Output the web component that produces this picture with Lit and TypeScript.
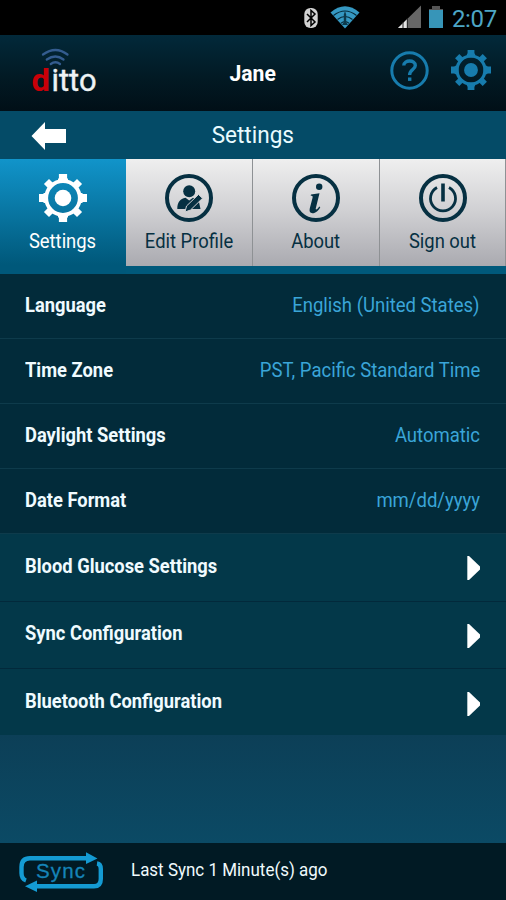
import { LitElement, html, css, svg } from 'lit';
import { customElement, property } from 'lit/decorators.js';

const TEETH = [0, 45, 90, 135, 180, 225, 270, 315];

@customElement('gear-icon')
export class GearIcon extends LitElement {
  static styles = css`
    :host {
      display: block;
    }
    svg {
      display: block;
      width: 100%;
      height: 100%;
    }
  `;

  render() {
    return html`
      <svg viewBox="-24 -24 48 48" fill="currentColor">
        ${TEETH.map(a => svg`<path
          d="${a % 90 ? 'M-3.6 -15.5V-23.4H3.6V-15.5Z' : 'M-5 -15V-19L-4.1 -20V-24H4.1V-20L5 -19V-15Z'}"
          transform="rotate(${a})" />`)}
        <circle r="16.8" fill="none" stroke="currentColor" stroke-width="3.8" />
        <circle r="8.3" />
      </svg>
    `;
  }
}

@customElement('setting-row')
export class SettingRow extends LitElement {
  @property() label = '';
  @property() value = '';
  @property({ type: Boolean, reflect: true }) link = false;

  static styles = css`
    :host {
      display: flex;
      box-sizing: border-box;
      align-items: center;
      justify-content: space-between;
      height: 65px;
      padding: 0 26px 2px 25px;
      background: #022b3a;
      border-bottom: 1px solid #0e3b4b;
      font-size: 20px;
    }
    :host([link]) {
      height: 67.5px;
      padding-bottom: 3px;
      background: #033849;
      border-bottom-color: #02293b;
    }
    :host([link]:last-of-type) {
      height: 66px;
      padding-bottom: 2px;
      border-bottom: 0;
    }
    .label {
      color: #f0fbff;
      font-weight: 700;
      transform: scaleX(0.917);
      transform-origin: left;
    }
    .value {
      color: #3aa5d8;
      transform: scaleX(0.925);
      transform-origin: right;
    }
    svg {
      display: block;
      margin-top: 5px;
    }
  `;

  render() {
    return html`
      <span class="label">${this.label}</span>
      ${this.link
        ? html`<svg width="13" height="24" viewBox="0 0 13 24"><path d="M.3 0H2L13 10.5V13.5L2 24H.3Z" fill="#fff" /></svg>`
        : html`<span class="value">${this.value}</span>`}
    `;
  }
}

@customElement('app-root')
export class AppRoot extends LitElement {
  static styles = css`
    :host {
      display: flex;
      flex-direction: column;
      box-sizing: border-box;
      width: 506px;
      height: 900px;
      overflow: hidden;
      font-family: Roboto, "Liberation Sans", sans-serif;
      background: linear-gradient(#0c3f57 735px, #0b4a65 843px);
      white-space: nowrap;
    }
    svg {
      display: block;
    }
    .status {
      display: flex;
      align-items: center;
      justify-content: flex-end;
      box-sizing: border-box;
      height: 35px;
      padding: 2px 9px 0 0;
      background: #000;
    }
    .status svg {
      margin-top: -2px;
    }
    .clock {
      margin-left: 6px;
      color: #4da6c6;
      font-size: 24px;
      letter-spacing: -0.3px;
    }
    .header {
      display: grid;
      grid-template-columns: 1fr auto 1fr;
      align-items: center;
      height: 76px;
      background: linear-gradient(#02293a, #021a24 55%, #010f17);
    }
    .name {
      color: #fff;
      font-size: 22.5px;
      font-weight: 700;
      transform: scaleX(0.94);
    }
    .logo {
      margin-left: 31px;
    }
    .actions {
      display: flex;
      align-items: center;
      justify-content: flex-end;
      gap: 22px;
      padding: 0 15px 6px 0;
      color: #177cad;
    }
    .actions gear-icon {
      width: 40px;
      height: 40px;
    }
    .titlebar {
      display: grid;
      grid-template-columns: 1fr auto 1fr;
      align-items: center;
      height: 48px;
      background: #044b67;
    }
    .title {
      color: #e9fbff;
      font-size: 24px;
      transform: scaleX(0.94);
    }
    .back {
      margin: 2px 0 0 31px;
    }
    .tabs {
      display: grid;
      grid-template-columns: 126px 127px 127px 126px;
      height: 115px;
      background: #00597b;
    }
    .tab {
      display: flex;
      flex-direction: column;
      align-items: center;
      box-sizing: border-box;
      height: 107px;
      padding-top: 15px;
      border-right: 1px solid #8e9194;
      background: linear-gradient(#efefef, #cfcfd2 50%, #aaaab0);
      color: #063042;
      font-size: 20px;
    }
    .tab span {
      margin-top: 8px;
      line-height: 22px;
      transform: scaleX(0.92);
    }
    .tab.active {
      height: 115px;
      border-right: 0;
      background: linear-gradient(#1194ca, #00587a 92%);
      color: #fff;
    }
    .tab gear-icon,
    .tab svg {
      width: 48px;
      height: 48px;
      flex: none;
    }
    .footer {
      display: flex;
      align-items: center;
      box-sizing: border-box;
      height: 57px;
      margin-top: auto;
      padding-left: 19px;
      background: #011a24;
      color: #f0fafd;
      font-size: 18.5px;
    }
    .footer span {
      margin: 0 0 3px 26.5px;
      transform: scaleX(0.917);
      transform-origin: left;
    }
  `;

  render() {
    return html`
      <div class="status">
        <svg width="190" height="35" viewBox="256 0 190 35">
          <rect x="304.3" y="8" width="13.4" height="20" rx="6" fill="#d2d2d2" />
          <path d="M307 14L315 22L311 25.5V10.5L315 14L307 22" fill="none" stroke="#000" stroke-width="1.5" />
          <path d="M330.5 12.5Q345 0 359.5 12.5L345 28.5Z" fill="#3598c2" />
          <path d="M333.5 15.5Q345 6.5 356.5 15.5M337.5 19.5Q345 13.5 352.5 19.5M341 23.2Q345 20 349 23.2" fill="none" stroke="#062a3a" stroke-width="1.1" />
          <path d="M345 11L346.2 14.5V22L348 25H342L343.8 22V14.5Z" fill="#0d3a4c" />
          <path d="M398 28L421 5.5V28Z" fill="#666" />
          <path d="M398 28L407 19.2V28Z" fill="#e4e4e4" />
          <path d="M403 22V28M407.3 18V28" stroke="#222" stroke-width="1" />
          <path d="M432 6H440V9H443V11H429V9H432Z" fill="#555" />
          <rect x="429" y="10" width="14" height="18" fill="#3795b8" />
        </svg>
        <div class="clock">2:07</div>
      </div>

      <div class="header">
        <svg class="logo" width="70" height="62" viewBox="31 42 70 62">
          <g fill="none" stroke="#345c8f" stroke-width="2.3" stroke-linecap="round">
            <path d="M43 54.5Q55.5 45.5 67.5 54.5" />
            <path d="M46.8 59.5Q55.5 53.5 63.5 59.5" />
            <path d="M50.8 64Q55.5 60.5 60 64" />
          </g>
          <text x="31.5" y="90.5" font-size="31" font-weight="700" fill="#c90008" textLength="18.5" lengthAdjust="spacingAndGlyphs">d</text>
          <text x="51.5" y="90.5" font-size="32" fill="#eef3f5" stroke="#eef3f5" stroke-width=".4" textLength="45" lengthAdjust="spacingAndGlyphs">itto</text>
        </svg>
        <div class="name">Jane</div>
        <div class="actions">
          <svg width="39" height="39" viewBox="0 0 39 39" fill="none" stroke="currentColor">
            <circle cx="19.5" cy="19.5" r="17.7" stroke-width="3" />
            <path d="M13.8 14.5C14 8.5 25.3 8.5 25.3 14.5C25.3 18.5 19.6 18.8 19.6 24" stroke-width="3.4" />
            <rect x="18" y="26.5" width="3.4" height="3.4" fill="currentColor" stroke="none" />
          </svg>
          <gear-icon></gear-icon>
        </div>
      </div>

      <div class="titlebar">
        <svg class="back" width="36" height="28" viewBox="0 0 36 28">
          <path d="M.5 14L14 0V7H35V21H14V28Z" fill="#fff" />
        </svg>
        <div class="title">Settings</div>
      </div>

      <div class="tabs">
        <div class="tab active">
          <gear-icon></gear-icon>
          <span>Settings</span>
        </div>
        <div class="tab">
          <svg viewBox="0 0 48 48" fill="currentColor">
            <circle cx="24" cy="24" r="22" fill="none" stroke="currentColor" stroke-width="4" />
            <circle cx="24.2" cy="17.3" r="6" />
            <path d="M12.3 35C12.3 28 15 25 20.5 23.8L24.2 26.5L28 23.8Q32.5 25.5 34 28L35.5 35Z" />
            <path d="M20 38L21.5 32L33.5 20.5L37.5 24.3L25.5 36Z" stroke="#d3d3d6" stroke-width="1" />
          </svg>
          <span>Edit Profile</span>
        </div>
        <div class="tab">
          <svg viewBox="0 0 48 48" fill="currentColor">
            <circle cx="24" cy="24" r="22" fill="none" stroke="currentColor" stroke-width="4" />
            <circle cx="27.2" cy="12.8" r="3.2" />
            <path d="M19 20.5L27.5 19.3L23.8 34.2C23.4 36 25 36 27.3 32.6L28.3 33.2C25.5 38 22.8 39.2 20.5 39.2C18 39.2 17 37.5 17.8 34.3L20.5 24C21 22 20.5 21.8 18.7 21.7Z" />
          </svg>
          <span>About</span>
        </div>
        <div class="tab">
          <svg viewBox="0 0 48 48" fill="none" stroke="currentColor">
            <circle cx="24" cy="24" r="22" stroke-width="4" />
            <path d="M18 13.5A12.5 12.5 0 1 0 30 13.5" stroke-width="2.8" />
            <path d="M24 9.5V27.5" stroke-width="3.6" />
          </svg>
          <span>Sign out</span>
        </div>
      </div>

      <setting-row label="Language" value="English (United States)"></setting-row>
      <setting-row label="Time Zone" value="PST, Pacific Standard Time"></setting-row>
      <setting-row label="Daylight Settings" value="Automatic"></setting-row>
      <setting-row label="Date Format" value="mm/dd/yyyy"></setting-row>
      <setting-row link label="Blood Glucose Settings"></setting-row>
      <setting-row link label="Sync Configuration"></setting-row>
      <setting-row link label="Bluetooth Configuration"></setting-row>

      <div class="footer">
        <svg width="85" height="40" viewBox="19 851 85 40">
          <g fill="none" stroke="#149bd3" stroke-width="4.4">
            <path d="M26 879.5Q21.5 878 21.5 872V866Q21.5 857.3 30 857.3H89" />
            <path d="M97 862.5Q100.8 863 100.8 868V878Q100.8 885.3 94 885.3H34" />
          </g>
          <path d="M86 851.2L97.5 857.5L86 863ZM37 879.5L25 885.3L37 891Z" fill="#149bd3" />
          <text x="36" y="877" font-family="Liberation Sans" font-size="20.5" fill="#1584b8" stroke="#1584b8" stroke-width=".3" textLength="49">Sync</text>
        </svg>
        <span>Last Sync 1 Minute(s) ago</span>
      </div>
    `;
  }
}
